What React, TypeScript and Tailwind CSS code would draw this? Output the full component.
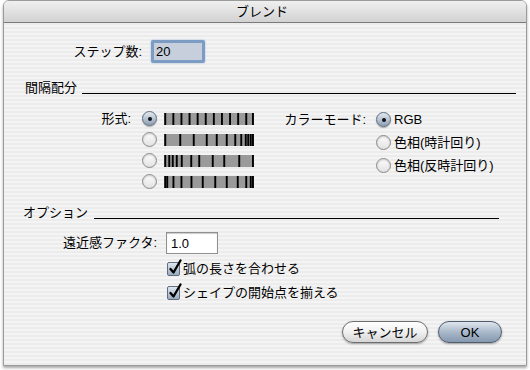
import React from 'react';

const font = { fontFamily: '"Liberation Sans", "Noto Sans CJK JP", sans-serif' };

const barRows: number[][] = [
  [0.3, 8.4, 16.5, 24.6, 32.7, 40.8, 48.9, 57, 65.1, 73.2, 81.3, 88],
  [0.3, 15.3, 28.8, 41.8, 51.8, 61.8, 70.3, 76.3, 80.8, 83.3, 85.8, 88],
  [0.3, 4.3, 7.8, 11.8, 16.8, 26.3, 34.3, 47.8, 59.3, 74.3, 88],
  [0.3, 2.3, 8.5, 16.5, 26.5, 37.8, 50.3, 61.8, 72.8, 81.3, 85.8, 88],
];

function Bars({ lines }: { lines: number[] }) {
  return (
    <svg width="90" height="12" viewBox="0 0 90 12" className="block">
      <rect x="0" y="0" width="90" height="12" fill="#9a9a9a" />
      {lines.map((p, i) => (
        <rect key={i} x={p} y="0" width="1.9" height="12" fill="#000" />
      ))}
    </svg>
  );
}

function Radio({ on }: { on?: boolean }) {
  return on ? (
    <div className="w-[15px] h-[15px] rounded-full border border-[#5d6c7e] bg-gradient-to-b from-[#e3e9f0] to-[#8ea0b6] shadow-[0_1px_1px_rgba(0,0,0,0.3)] flex items-center justify-center">
      <div className="w-[4px] h-[4px] rounded-full bg-[#111]" />
    </div>
  ) : (
    <div className="w-[15px] h-[15px] rounded-full border border-[#8a8a8a] bg-gradient-to-b from-[#fdfdfd] to-[#e2e2e2] shadow-[inset_0_1px_2px_rgba(0,0,0,0.2)]" />
  );
}

function Check() {
  return (
    <div className="relative w-[13px] h-[14px] rounded-[2px] border border-[#5f6e80] bg-gradient-to-b from-[#dfe6ee] to-[#9aabbe]">
      <svg width="14" height="16" viewBox="0 0 14 16" className="absolute left-[0px] top-[-4px]">
        <path d="M2.5 10 L5.5 13.5 L12.5 1.5" stroke="#000" strokeWidth="2.3" fill="none" strokeLinecap="round" strokeLinejoin="round" />
      </svg>
    </div>
  );
}

function Heading({ label, pl, pr, gap }: { label: string; pl: string; pr: string; gap: string }) {
  return (
    <div className={`flex items-end h-[16px] ${pl} ${pr}`}>
      <span className="leading-[16px]">{label}</span>
      <div className={`flex-1 h-px bg-black mb-[2px] ${gap}`} />
    </div>
  );
}

export default function App() {
  return (
    <div className="w-[530px] h-[370px] bg-white text-[13px] text-black" style={font}>
      <div className="ml-[3px] w-[524px] h-[366px] flex flex-col border border-[#9b9b9b] rounded-t-[6px] overflow-hidden shadow-[0_2px_3px_rgba(0,0,0,0.35)]">
        <div className="h-[22px] shrink-0 flex items-center justify-center border-b border-[#7a7a7a] bg-gradient-to-b from-[#f0f0f0] to-[#d2d2d2]">
          <span className="pr-[6px] leading-none">ブレンド</span>
        </div>

        <div className="flex-1 flex flex-col bg-[image:repeating-linear-gradient(0deg,#ececec_0px,#ececec_2px,#f4f4f4_2px,#f4f4f4_4px)]">
          <div className="flex items-center mt-[17px]">
            <span className="w-[138px] text-right">ステップ数:</span>
            <div className="ml-[9px] w-[54px] h-[23px] rounded-[2px] border-[3px] border-[#7d9cc4] shadow-[0_0_2px_#9bb6d8] bg-[#c6cfdb] flex items-center px-[2px]">
              <span className="leading-none">20</span>
            </div>
          </div>

          <div className="mt-[17px]">
            <Heading label="間隔配分" pl="pl-[21px]" pr="pr-[10px]" gap="ml-[5px]" />
          </div>

          <div className="flex mt-[12px]">
            <div className="flex flex-col">
              {barRows.map((r, i) => (
                <div key={i} className="flex items-center h-[21px]">
                  <span className="w-[127px] text-right">{i === 0 ? '形式:' : ''}</span>
                  <div className="ml-[11px]">
                    <Radio on={i === 0} />
                  </div>
                  <div className="ml-[7px]">
                    <Bars lines={r} />
                  </div>
                </div>
              ))}
            </div>
            <div className="flex flex-col ml-[16px]">
              {['RGB', '色相(時計回り)', '色相(反時計回り)'].map((t, i) => (
                <div key={t} className="flex items-center h-[23px]">
                  <span className="w-[96px] text-right">{i === 0 ? 'カラーモード:' : ''}</span>
                  <div className="ml-[10px]">
                    <Radio on={i === 0} />
                  </div>
                  <span className="ml-[3px]">{t}</span>
                </div>
              ))}
            </div>
          </div>

          <div className="mt-[13px]">
            <Heading label="オプション" pl="pl-[19px]" pr="pr-[27px]" gap="ml-[6px]" />
          </div>

          <div className="flex items-center mt-[11px]">
            <span className="w-[153px] text-right">遠近感ファクタ:</span>
            <div className="ml-[9px] w-[52px] h-[22px] border border-[#8f8f8f] bg-white shadow-[inset_0_1px_1px_rgba(0,0,0,0.2)] flex items-center px-[4px]">
              <span className="leading-none">1.0</span>
            </div>
          </div>

          <div className="flex flex-col mt-[3px] pl-[163px]">
            {['弧の長さを合わせる', 'シェイプの開始点を揃える'].map((t) => (
              <div key={t} className="flex items-center h-[24px]">
                <Check />
                <span className="ml-[3px]">{t}</span>
              </div>
            ))}
          </div>

          <div className="flex justify-end gap-[10px] mt-[16px] pr-[24px]">
            <button className="w-[86px] h-[22px] rounded-full border border-[#6e6e6e] bg-gradient-to-b from-[#ffffff] via-[#f0f0f0] to-[#d6d6d6] shadow-[0_1px_2px_rgba(0,0,0,0.35)] leading-none">
              キャンセル
            </button>
            <button className="w-[64px] h-[22px] rounded-full border border-[#4f5d6e] bg-gradient-to-b from-[#dfe6ee] via-[#a9b8ca] to-[#8699b0] shadow-[0_1px_2px_rgba(0,0,0,0.35)] leading-none">
              OK
            </button>
          </div>
        </div>
      </div>
    </div>
  );
}
